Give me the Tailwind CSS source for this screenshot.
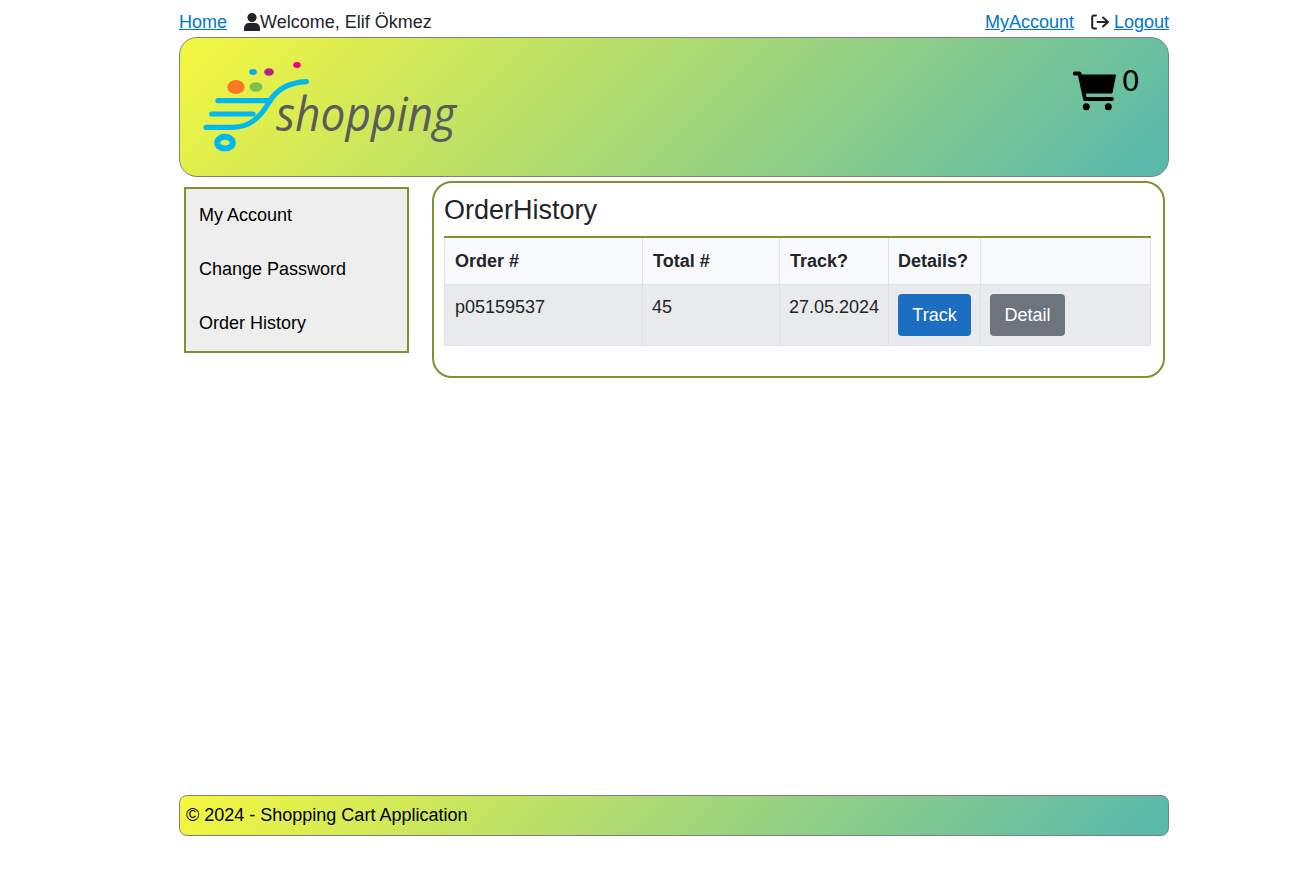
<!DOCTYPE html>
<html lang="en">
  <head>
    <meta charset="UTF-8" />
    <meta name="viewport" content="width=device-width, initial-scale=1.0" />
    <title>Order History - Shopping Cart</title>
    <script src="https://cdn.jsdelivr.net/npm/@tailwindcss/browser@4"></script>
  </head>
  <body class="bg-white font-['Liberation_Sans',Arial,sans-serif] text-[18px] text-[#212529]">
    <div class="w-[990px] ml-[179px]">
      <!-- Top links -->
      <nav class="flex justify-between items-center h-[37px] pt-[7px] leading-[30px]">
        <div class="flex items-center">
          <a href="#" class="underline text-[#0077cc]">Home</a>
          <svg class="w-[16px] h-[18px] ml-[17px] fill-[#212529]" viewBox="0 0 16 18">
            <circle cx="8" cy="4.6" r="4.6" />
            <path d="M0 18v-2.6C0 12 2.4 10 5 10h6c2.6 0 5 2 5 5.4V18z" />
          </svg>
          <span>Welcome, Elif Ökmez</span>
        </div>
        <div class="flex items-center">
          <a href="#" class="underline text-[#0077cc]">MyAccount</a>
          <svg class="w-[18px] h-[16px] ml-[17px] mr-[5px]" viewBox="0 0 18 16" fill="none" stroke="#212529" stroke-width="2" stroke-linecap="round" stroke-linejoin="round">
            <path d="M5 1.5H3C2 1.5 1.2 2.2 1.2 3.2v9.6c0 1 .8 1.7 1.8 1.7h2" />
            <path d="M6.5 8H17M12 3.5 17 8l-5 4.5" />
          </svg>
          <a href="#" class="underline text-[#0077cc]">Logout</a>
        </div>
      </nav>

      <!-- Banner -->
      <header class="flex justify-between h-[140px] border border-[#808080] rounded-[18px] bg-[linear-gradient(135deg,#f6f73e,#56b8ae)]">
        <svg class="w-[320px] h-[110px] ml-[20px] mt-[20px]" viewBox="0 0 320 110">
          <ellipse cx="36" cy="29" rx="8.700" ry="7" fill="#f97a22" />
          <ellipse cx="56" cy="29" rx="6.500" ry="4.800" fill="#7cbf4a" />
          <ellipse cx="53" cy="14" rx="3.800" ry="3" fill="#00b4ea" />
          <ellipse cx="69" cy="14" rx="4.800" ry="3.800" fill="#b5208f" />
          <ellipse cx="97" cy="7" rx="3.800" ry="3" fill="#ec008c" />
          <g fill="none" stroke="#00b7f0" stroke-width="5.200" stroke-linecap="round">
            <path d="M18 42.700H70" />
            <path d="M11.700 56H53" />
            <path d="M6 69.300H33C50 69.300 60 59 68 46 75 33 86 24.500 106.500 23.700" />
            <ellipse cx="25" cy="84.700" rx="7.800" ry="5.900" stroke-width="6" />
          </g>
          <text x="76" y="73" font-family="'Open Sans',sans-serif" font-style="italic" font-weight="500" font-size="48" fill="#5b5b5b" textLength="180" lengthAdjust="spacingAndGlyphs">shopping</text>
        </svg>
        <div class="flex items-start mr-[28px] mt-[27px]">
          <svg class="w-[45px] h-[40px] mt-[6px]" viewBox="0 0 45 40">
            <path d="M1.500 2.500h5L12 28h27" fill="none" stroke="#000" stroke-width="3.800" stroke-linecap="round" stroke-linejoin="round" />
            <path d="M6 4h36.500L39 22H10z" fill="#000" stroke="#000" stroke-linejoin="round" />
            <circle cx="13.300" cy="35.700" r="3.500" fill="#000" />
            <circle cx="35.300" cy="35.700" r="3.500" fill="#000" />
          </svg>
          <span class="ml-[4px] mt-[1px] font-['DejaVu_Sans',sans-serif] text-[29px] leading-[30px] text-black">0</span>
        </div>
      </header>

      <div class="flex items-start min-h-[618px]">
        <!-- Side menu -->
        <aside class="w-[225px] h-[166px] ml-[5px] mt-[10px] border-2 border-[#7e9232] bg-[#eeeeee] pt-[1px] text-black">
          <a href="#" class="block h-[54px] pl-[13px] leading-[50px]">My Account</a>
          <a href="#" class="block h-[54px] pl-[13px] leading-[50px]">Change Password</a>
          <a href="#" class="block h-[54px] pl-[13px] leading-[50px]">Order History</a>
        </aside>

        <!-- Order table -->
        <main class="w-[733px] h-[197px] ml-[23px] mt-[4px] border-2 border-[#7e9232] rounded-[20px] px-[10px]">
          <h2 class="h-[53px] text-[27px] leading-[54px]">OrderHistory</h2>
          <table class="w-[707px] table-fixed border-collapse border-t-2 border-t-[#7e9232]">
            <thead class="bg-[#f8f9fa]">
              <tr class="h-[47px]">
                <th class="w-[198px] px-[10px] pt-[2px] text-left border border-[#dee2e6] border-t-0">Order #</th>
                <th class="w-[137px] px-[10px] pt-[2px] text-left border border-[#dee2e6] border-t-0">Total #</th>
                <th class="w-[109px] px-[10px] pt-[2px] text-left border border-[#dee2e6] border-t-0">Track?</th>
                <th class="w-[92px] px-[9px] pt-[2px] text-left border border-[#dee2e6] border-t-0">Details?</th>
                <th class="px-[9px] border border-[#dee2e6] border-t-0"></th>
              </tr>
            </thead>
            <tbody class="bg-[#e9eaec]">
              <tr class="h-[61px]">
                <td class="px-[10px] pt-[9px] align-top border border-[#dee2e6]">p05159537</td>
                <td class="px-[9px] pt-[9px] align-top border border-[#dee2e6]">45</td>
                <td class="px-[9px] pt-[9px] align-top border border-[#dee2e6] whitespace-nowrap">27.05.2024</td>
                <td class="px-[9px] pt-[9px] align-top border border-[#dee2e6]">
                  <a href="#" class="block w-[73px] h-[42px] rounded-[4px] bg-[#1b6ec2] text-white text-center leading-[42px]">Track</a>
                </td>
                <td class="px-[9px] pt-[9px] align-top border border-[#dee2e6]">
                  <a href="#" class="block w-[75px] h-[42px] rounded-[4px] bg-[#6c757d] text-white text-center leading-[42px]">Detail</a>
                </td>
              </tr>
            </tbody>
          </table>
        </main>
      </div>

      <footer class="h-[41px] border border-[#808080] rounded-[8px] bg-[linear-gradient(135deg,#f6f73e,#56b8ae)] pl-[6px] leading-[38px] text-black">
        © 2024 - Shopping Cart Application
      </footer>
    </div>
  </body>
</html>
